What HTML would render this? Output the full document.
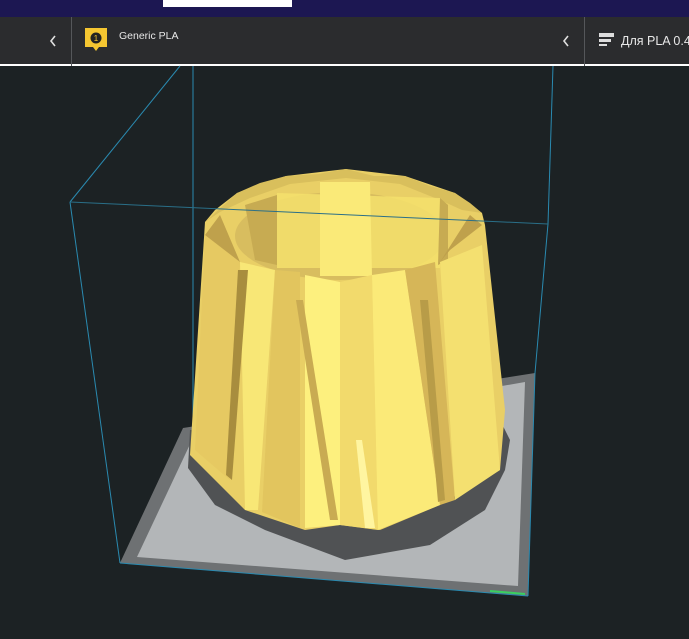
<!DOCTYPE html>
<html><head><meta charset="utf-8"><style>
html,body{margin:0;padding:0;width:689px;height:639px;overflow:hidden;background:#1c2224;font-family:"Liberation Sans",sans-serif}
svg{position:absolute;left:0;top:0}
.t{position:absolute;color:#e8e8e8;font-size:11px}
</style></head><body>
<svg width="689" height="639" viewBox="0 0 689 639">
<rect x="0" y="0" width="689" height="639" fill="#1c2224"/>
<rect x="0" y="0" width="689" height="17" fill="#1c1752"/>
<rect x="163" y="0" width="129" height="7" fill="#fff"/>
<rect x="0" y="17" width="689" height="48" fill="#2b2c2e"/>
<rect x="0" y="64" width="689" height="2" fill="#fff"/>
<line x1="71.5" y1="17" x2="71.5" y2="66" stroke="#55575a"/>
<line x1="584.5" y1="17" x2="584.5" y2="66" stroke="#55575a"/>
<path d="M55 36 L51 41 L55 46" stroke="#e0e0e0" stroke-width="1.6" fill="none"/>
<path d="M568 36 L564 41 L568 46" stroke="#e0e0e0" stroke-width="1.6" fill="none"/>
<path d="M85 28 H107 V47 H99 L96 51 L93 47 H85 Z" fill="#f5c631"/>
<circle cx="96" cy="38" r="5.5" fill="#222"/>
<text x="96" y="41" fill="#f5c631" font-size="8" text-anchor="middle" font-family="Liberation Sans">1</text>
<rect x="599" y="33" width="15" height="4" fill="#ddd"/>
<rect x="599" y="39" width="12" height="3" fill="#ddd"/>
<rect x="599" y="44" width="8" height="2" fill="#ddd"/>
<g stroke="#2a8ab0" stroke-width="1" fill="none">
<line x1="193" y1="66" x2="193" y2="430"/>
<line x1="180" y1="66" x2="70" y2="202"/>
<line x1="553" y1="66" x2="548" y2="224"/>
<line x1="548" y1="224" x2="535" y2="373"/>
<line x1="70" y1="202" x2="120" y2="563"/>
</g>
<polygon points="120,563 183,428 535,373 528,596" fill="#6e7173"/>
<polygon points="137,557 192,440 525,382 518,586" fill="#b3b6b8"/>
<polyline points="120,563 528,596" stroke="#2a8ab0" fill="none"/>
<line x1="528" y1="596" x2="535" y2="373" stroke="#2a8ab0"/>
<line x1="490" y1="591" x2="525" y2="594" stroke="#3ad060" stroke-width="2"/>
<polygon points="188,468 215,505 265,530 345,560 430,545 485,510 505,470 510,440 500,420 190,430" fill="#505254"/>
<!-- vase body -->
<polygon points="205,222 215,210 237,193 286,176 346,169 405,176 455,193 482,213 485,225 505,410 500,470 440,505 380,530 340,525 305,530 245,510 190,455" fill="#e9cf66"/>
<!-- rim teeth -->
<polygon points="237,193 260,183 286,176 318,174 346,169 374,176 405,176 430,186 455,193 470,203 482,213 462,210 440,200 400,184 346,178 290,184 250,198 220,212 205,222" fill="#d9bf5c"/>
<ellipse cx="340" cy="236" rx="105" ry="44" fill="#d8bd5f"/>
<polygon points="277,193 440,198 440,268 277,268" fill="#f4e06c" opacity="0.85"/>
<polygon points="320,182 370,182 372,276 320,276" fill="#faea78"/>
<polygon points="245,205 277,195 277,265 255,260" fill="#c7ab52"/>
<polygon points="440,198 438,265 448,260 448,205" fill="#c7ab52"/>
<polygon points="205,235 220,215 240,262 228,260" fill="#bfa14c"/>
<polygon points="470,215 482,225 450,250 440,262" fill="#bfa14c"/>
<line x1="70" y1="202" x2="548" y2="224" stroke="#2a6f88" stroke-width="1"/>
<polygon points="240,262 275,270 258,510 245,510" fill="#f8e776"/>
<polygon points="275,270 300,272 300,528 262,512" fill="#e2c55e"/>
<polygon points="305,275 340,282 340,525 305,528" fill="#fdf07e"/>
<polygon points="340,282 372,275 378,530 340,525" fill="#f2da6c"/>
<polygon points="372,275 405,270 440,505 378,530" fill="#fbea78"/>
<polygon points="405,270 435,262 455,500 440,505" fill="#d6b658"/>
<polygon points="440,262 482,245 500,470 455,500" fill="#f4e070"/>
<polygon points="205,235 240,262 230,480 195,450" fill="#e6c962"/>
<polygon points="238,270 248,270 232,480 226,475" fill="#a88d3e"/>
<polygon points="296,300 303,300 338,520 330,520" fill="#c9ab52"/>
<polygon points="420,300 428,300 445,500 438,502" fill="#b89c48"/>
<polygon points="356,440 362,440 375,528 365,528" fill="#fff5a0"/>
</svg>
<div class="t" style="left:119px;top:30px;font-size:10.5px">Generic PLA</div>
<div class="t" style="left:621px;top:34px;font-size:12.5px;white-space:nowrap">Для PLA 0.4</div>
</body></html>
